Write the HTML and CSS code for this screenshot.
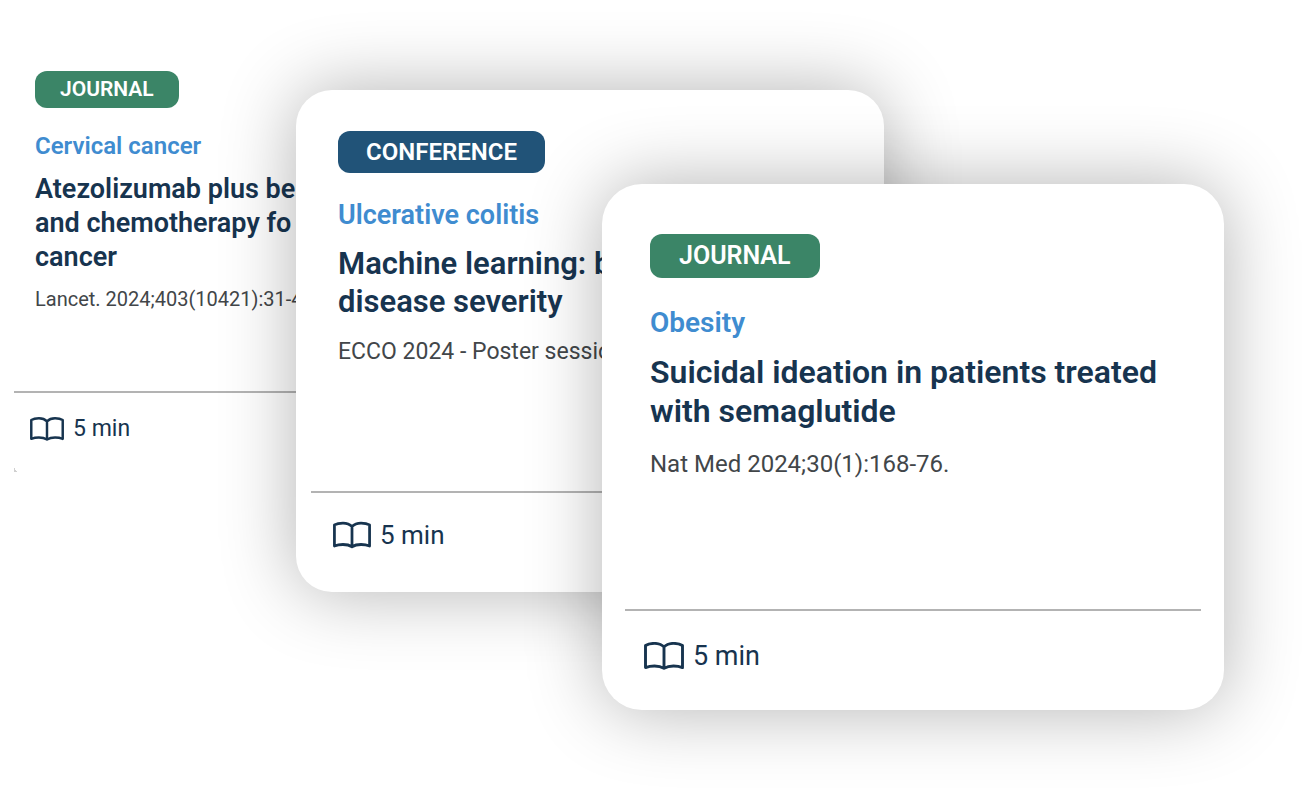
FILE: index.html
```html
<!DOCTYPE html>
<html lang="en">
<head>
    <meta charset="UTF-8">
    <meta name="viewport" content="width=device-width, initial-scale=1.0">
    <title>Articles</title>
    <link rel="stylesheet" href="styles.css">
</head>
<body>
    <!-- Book icon shared by the cards -->
    <svg class="sprite" aria-hidden="true">
        <symbol id="book" viewBox="0 0 40 28">
            <path d="M20 5C17.500 2.400 14 1.400 10.500 1.400C7 1.400 4 1.900 1.500 3.400V25.600C4 24.600 7 24 10.500 24C14 24 17.500 24.800 20 26.400C22.500 24.800 26 24 29.500 24C33 24 36 24.600 38.500 25.600V3.400C36 1.900 33 1.400 29.500 1.400C26 1.400 22.500 2.400 20 5ZM20 5V26.400" fill="none" stroke="currentColor" stroke-width="2.900" stroke-linejoin="round"/>
        </symbol>
    </svg>

    <main class="deck">
        <article class="card card-back">
            <div class="content">
                <span class="badge journal">JOURNAL</span>
                <p class="topic">Cervical cancer</p>
                <h2 class="title">Atezolizumab plus be<br>and chemotherapy fo<br>cancer</h2>
                <p class="source">Lancet. 2024;403(10421):31-4</p>
            </div>
            <footer class="footer">
                <svg class="icon" aria-hidden="true"><use href="#book"/></svg>
                <span>5 min</span>
            </footer>
        </article>

        <article class="card card-middle">
            <div class="content">
                <span class="badge conference">CONFERENCE</span>
                <p class="topic">Ulcerative colitis</p>
                <h2 class="title">Machine learning: b<br>disease severity</h2>
                <p class="source">ECCO 2024 - Poster sessio</p>
            </div>
            <footer class="footer">
                <svg class="icon" aria-hidden="true"><use href="#book"/></svg>
                <span>5 min</span>
            </footer>
        </article>

        <article class="card card-front">
            <div class="content">
                <span class="badge journal">JOURNAL</span>
                <p class="topic">Obesity</p>
                <h2 class="title">Suicidal ideation in patients treated with semaglutide</h2>
                <p class="source">Nat Med 2024;30(1):168-76.</p>
            </div>
            <footer class="footer">
                <svg class="icon" aria-hidden="true"><use href="#book"/></svg>
                <span>5 min</span>
            </footer>
        </article>
    </main>
</body>
</html>
```

FILE: styles.css
```css
* {
    box-sizing: border-box;
}

body {
    margin: 0;
    background-color: #fff;
    font-family: Roboto, "Liberation Sans", sans-serif;
    color: #17344f;
}

.sprite {
    display: none;
}

/* the cards share grid cells, so each one overlaps the one before */
.deck {
    display: grid;
    grid-template-columns: 14px 282px 306px 282px 1fr 90px;
    align-items: start;
    padding-bottom: 90px;
}

.card {
    grid-row: 1;
    background-color: #fff;
}

.card-back {
    grid-column: 2 / 4;
    margin-top: 30px;
    padding-top: 41px;
}

/* trace of the rounded corner */
.card-back::after {
    content: "";
    display: block;
    width: 3px;
    height: 5px;
    background: linear-gradient(to top right, #d0d0d0 50%, #fff 50%);
}

.card-middle {
    grid-column: 3 / 5;
    margin-top: 90px;
    padding: 41px 15px 19px;
    border-radius: 36px;
    box-shadow: 0 0 74px rgba(0, 0, 0, 0.3);
}

.card-front {
    grid-column: 4 / 6;
    margin-top: 184px;
    padding: 50px 23px 25px;
    border-radius: 40px;
    box-shadow: 0 0 74px rgba(0, 0, 0, 0.3);
}

.content {
    display: flex;
    flex-direction: column;
    align-items: flex-start;
    border-bottom: 2px solid #b3b3b3;
}

.badge {
    border-radius: 12px;
    color: #fff;
    font-weight: 600;
    text-align: center;
}

.journal {
    background-color: #3b8567;
}

.conference {
    background-color: #215378;
}

.topic,
.title,
.source {
    margin: 0;
}

.topic {
    color: #3f8cd0;
    font-weight: 600;
}

.title {
    font-weight: 600;
}

.source {
    color: #424649;
}

.footer {
    display: flex;
    align-items: center;
    gap: 9px;
}

/* back card */
.card-back .content {
    padding: 0 21px 79px;
}

.card-back .badge {
    padding: 0 25px;
    font-size: 21px;
    line-height: 37px;
}

.card-back .topic {
    margin-top: 23px;
    font-size: 24px;
    line-height: 30px;
}

.card-back .title {
    margin-top: 11px;
    font-size: 27px;
    line-height: 34px;
    white-space: nowrap;
}

.card-back .source {
    margin-top: 12px;
    font-size: 20px;
    line-height: 26px;
}

.card-back .footer {
    padding: 20px 16px 22px;
    font-size: 23px;
    line-height: 32px;
}

.card-back .icon {
    width: 34px;
    height: 26px;
}

/* middle card */
.card-middle .content {
    padding: 0 27px 125px;
}

.card-middle .badge {
    padding: 0 28px;
    font-size: 24px;
    line-height: 42px;
}

.card-middle .topic {
    margin-top: 26px;
    font-size: 27px;
    line-height: 32px;
}

.card-middle .title {
    margin-top: 14px;
    font-size: 31px;
    line-height: 38px;
}

.card-middle .source {
    margin-top: 17px;
    font-size: 23px;
    line-height: 28px;
}

.card-middle .footer {
    padding: 26px 22px 22px;
    font-size: 26px;
    line-height: 32px;
}

.card-middle .icon {
    width: 38px;
    height: 28px;
}

/* front card */
.card-front .content {
    padding: 0 25px 131px;
}

.card-front .badge {
    padding: 0 29px;
    font-size: 25px;
    line-height: 44px;
}

.card-front .topic {
    margin-top: 28px;
    font-size: 28px;
    line-height: 34px;
}

.card-front .title {
    margin-top: 13px;
    font-size: 32px;
    line-height: 39px;
}

.card-front .source {
    margin-top: 19px;
    font-size: 24px;
    line-height: 28px;
}

.card-front .footer {
    padding: 29px 19px 13px;
    font-size: 27px;
    line-height: 32px;
}

.card-front .icon {
    width: 40px;
    height: 28px;
}
```
